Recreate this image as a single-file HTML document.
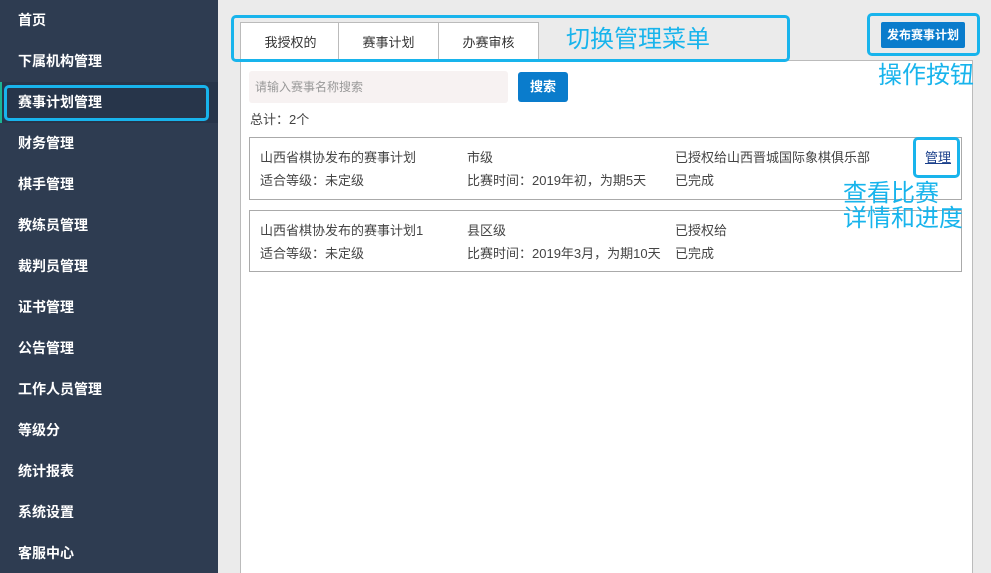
<!DOCTYPE html>
<html><head><meta charset="utf-8"><style>
*{margin:0;padding:0;box-sizing:border-box}
html,body{width:991px;height:573px;overflow:hidden}
body{background:#ebebeb;font-family:"Liberation Sans","Noto Sans CJK SC",sans-serif;position:relative}
.side{position:absolute;left:0;top:0;width:218px;height:573px;background:#2e3c51}
.side .n{position:absolute;left:18px;color:#fff;font-weight:bold;font-size:14px;line-height:20px}
.act{position:absolute;left:0;top:82px;width:218px;height:41px;background:#27354a;border-left:2px solid #1ab394}
.ann{position:absolute;border:3px solid #18b4ec;border-radius:5px}
.at{position:absolute;color:#18b4ec;font-size:24px;line-height:26px;white-space:nowrap}
.panel{position:absolute;left:240px;top:60px;width:733px;height:520px;background:#fff;border:1px solid #bbb}
.tab{position:absolute;top:22px;height:39px;width:101px;background:#fff;border:1px solid #bbb;border-bottom:none;font-size:13px;color:#333;text-align:center;line-height:40px}
.t{position:absolute;font-size:13px;color:#444;line-height:16px;white-space:nowrap}
.card{position:absolute;left:249px;width:713px;border:1px solid #aaa;background:#fff}
</style></head><body>
<div class="side">
<div class="act"></div>
<div class="n" style="top:10px">首页</div>
<div class="n" style="top:51px">下属机构管理</div>
<div class="n" style="top:92px">赛事计划管理</div>
<div class="n" style="top:133px">财务管理</div>
<div class="n" style="top:174px">棋手管理</div>
<div class="n" style="top:215px">教练员管理</div>
<div class="n" style="top:256px">裁判员管理</div>
<div class="n" style="top:297px">证书管理</div>
<div class="n" style="top:338px">公告管理</div>
<div class="n" style="top:379px">工作人员管理</div>
<div class="n" style="top:420px">等级分</div>
<div class="n" style="top:461px">统计报表</div>
<div class="n" style="top:502px">系统设置</div>
<div class="n" style="top:543px">客服中心</div>
</div>
<div class="ann" style="left:4px;top:85px;width:205px;height:36px"></div>
<div class="panel"></div>
<div class="tab" style="left:240px">我授权的</div>
<div class="tab" style="left:338px">赛事计划</div>
<div class="tab" style="left:438px">办赛审核</div>
<div class="ann" style="left:231px;top:15px;width:559px;height:47px"></div>
<div class="at" style="left:566px;top:27px">切换管理菜单</div>
<div style="position:absolute;left:881px;top:22px;width:84px;height:26px;background:#0a7ccc;border-radius:2px;color:#fff;font-size:12px;font-weight:bold;text-align:center;line-height:26px">发布赛事计划</div>
<div class="ann" style="left:867px;top:13px;width:113px;height:43px"></div>
<div class="at" style="left:878px;top:63px">操作按钮</div>
<div style="position:absolute;left:249px;top:71px;width:259px;height:32px;background:#f7f2f2;border-radius:3px;font-size:12px;color:#999;line-height:32px;padding-left:6px">请输入赛事名称搜索</div>
<div style="position:absolute;left:518px;top:72px;width:50px;height:30px;background:#0a7ccc;border-radius:3px;color:#fff;font-size:13px;font-weight:bold;text-align:center;line-height:30px">搜索</div>
<div class="t" style="left:250px;top:112px">总计：2个</div>
<div class="card" style="top:137px;height:63px"></div>
<div class="card" style="top:210px;height:62px"></div>
<div class="t" style="left:260px;top:150px">山西省棋协发布的赛事计划</div>
<div class="t" style="left:467px;top:150px">市级</div>
<div class="t" style="left:675px;top:150px">已授权给山西晋城国际象棋俱乐部</div>
<div class="t" style="left:260px;top:173px">适合等级：未定级</div>
<div class="t" style="left:467px;top:173px">比赛时间：2019年初，为期5天</div>
<div class="t" style="left:675px;top:173px">已完成</div>
<div class="t" style="left:925px;top:150px;color:#1a3f8a;text-decoration:underline">管理</div>
<div class="ann" style="left:913px;top:137px;width:47px;height:41px"></div>
<div class="at" style="left:843px;top:181px;line-height:25px">查看比赛<br>详情和进度</div>
<div class="t" style="left:260px;top:223px">山西省棋协发布的赛事计划1</div>
<div class="t" style="left:467px;top:223px">县区级</div>
<div class="t" style="left:675px;top:223px">已授权给</div>
<div class="t" style="left:260px;top:246px">适合等级：未定级</div>
<div class="t" style="left:467px;top:246px">比赛时间：2019年3月，为期10天</div>
<div class="t" style="left:675px;top:246px">已完成</div>
</body></html>
